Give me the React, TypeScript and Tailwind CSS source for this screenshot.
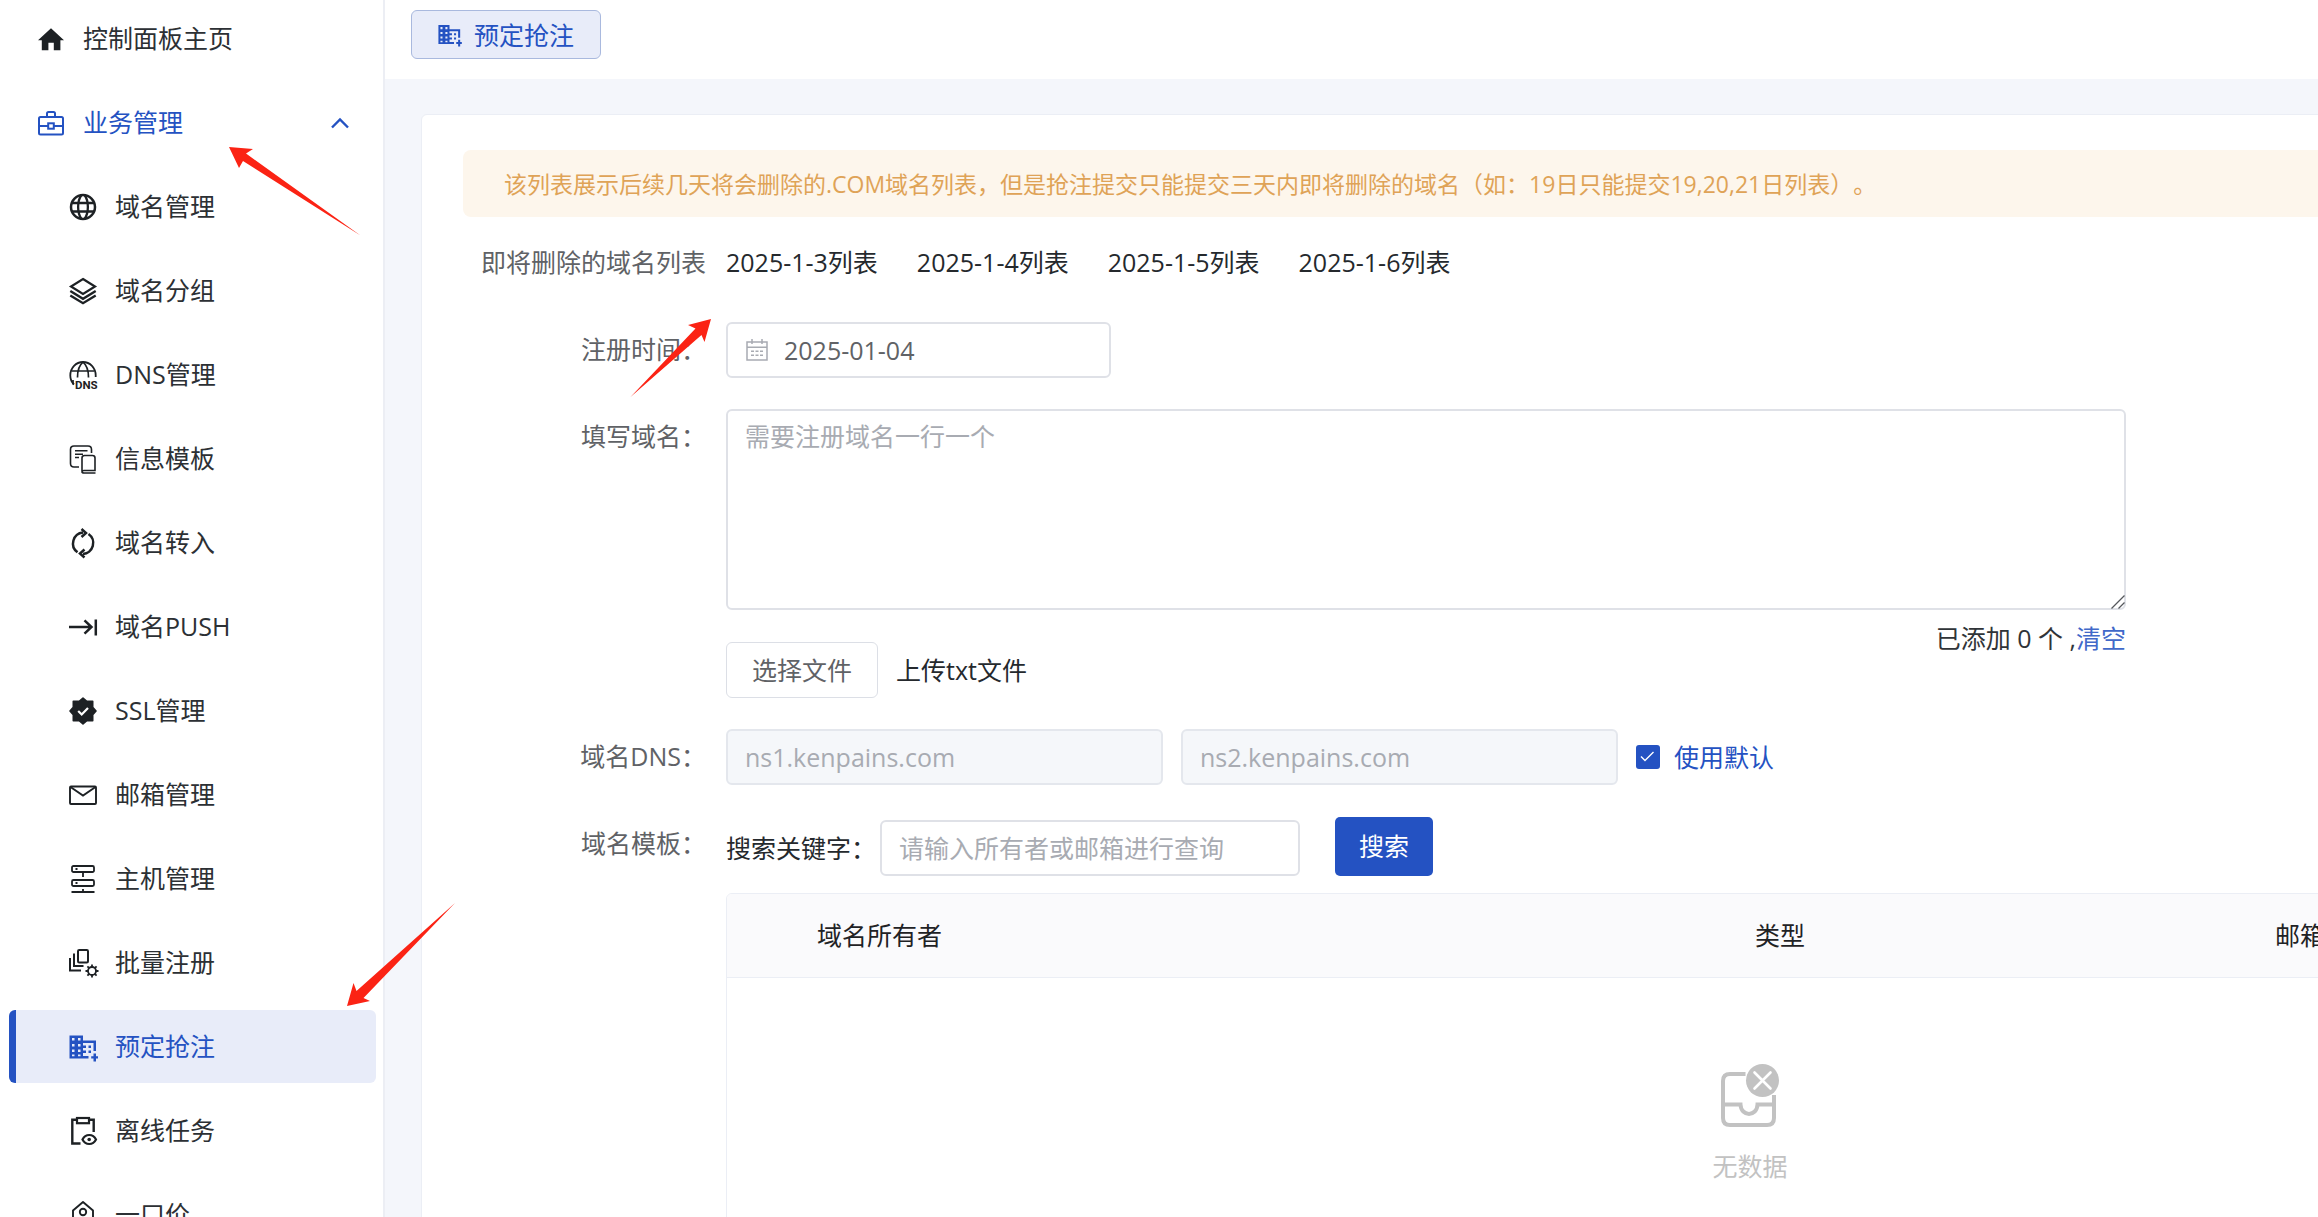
import type { ReactNode } from "react";

type IconProps = { size?: number };

function Svg({ size = 28, children }: { size?: number; children: ReactNode }) {
  return (
    <svg
      width={size}
      height={size}
      viewBox="0 0 28 28"
      fill="none"
      stroke="currentColor"
      strokeWidth={2}
      className="shrink-0 overflow-visible"
      aria-hidden="true"
    >
      {children}
    </svg>
  );
}

const HomeIcon = () => (
  <Svg>
    <path d="M14 3.3 27 15.2h-3.600v10h-6.600v-7.400h-5.400v7.400H4.800v-10H1z" fill="currentColor" stroke="none" />
  </Svg>
);

const BriefcaseIcon = () => (
  <Svg>
    <rect x="2" y="8" width="24" height="17.5" rx="1.5" />
    <path d="M10 8V4.500q0-1.500 1.500-1.500h5q1.500 0 1.500 1.500V8M2 17h9M17 17h9" />
    <rect x="11.200" y="14.300" width="5.600" height="5.400" />
  </Svg>
);

const GlobeIcon = () => (
  <Svg>
    <circle cx="14" cy="14" r="12" strokeWidth={2.5} />
    <path d="M12.500 2C8 8 8 20 12.500 26M15.500 2C20 8 20 20 15.500 26M3 10h22M3 18.500h22" strokeWidth={2.3} />
  </Svg>
);

const LayersIcon = () => (
  <Svg>
    <path d="M14 2 26 9.500 14 17 2 9.500z" strokeWidth={2.2} />
    <path d="M1.300 14 14 21.800 26.700 14M1.300 18.400 14 26.200 26.700 18.400" strokeWidth={2.4} />
  </Svg>
);

const DnsIcon = () => (
  <Svg>
    <path d="M5 23.500C2.500 21 1.300 18.500 1.300 14.500 1.300 7 7 1 14 1s12.700 6 12.700 13.500v1.500" strokeWidth={1.800} />
    <path d="M2.500 10h23M8.500 16.500C8.500 10 10.500 4 14 1.200 17.500 4 19.500 10 19.500 16.500M4 19v4.500" strokeWidth={1.700} />
    <text
      x="6"
      y="28.200"
      fill="currentColor"
      stroke="none"
      fontFamily="Roboto, sans-serif"
      fontSize="11.500"
      fontWeight="700"
    >
      DNS
    </text>
  </Svg>
);

const TemplateIcon = () => (
  <Svg>
    <path d="M10 22H5q-3.500 0-3.500-3.500v-14Q1.500 1 5 1h14q3.500 0 3.500 3.500V8" strokeWidth={1.600} />
    <path d="M6 5.800h12.500M6 9.200h8M6 12.500h4" strokeWidth={1.600} />
    <path d="M13 26V13q0-2.500 2.500-2.500h8q2.500 0 2.500 2.500v12.500H15q-2 0-2 1.300 0 1.200 2 1.200h11.500" strokeWidth={1.600} />
  </Svg>
);

const TransferIcon = () => (
  <Svg>
    <path d="M8.500 23.300A11 11 0 0 1 14 3.500M19.500 5a11 11 0 0 1-5.500 20" strokeWidth={2.500} />
    <path d="m12.500 0 4.500 4-4.500 4M15.500 20.500l-4.500 4 4.500 4" strokeWidth={2.500} />
  </Svg>
);

const PushIcon = () => (
  <Svg>
    <path d="M0 14h22M15.500 7.300l7 6.700-7 6.700M26.800 6.500v16" strokeWidth={2.500} />
  </Svg>
);

const SealIcon = () => (
  <Svg>
    <path
      d="M14 1l3.800 3.300h5.900v5.900L27 14l-3.300 3.800v5.900h-5.900L14 27l-3.800-3.300H4.300v-5.900L1 14l3.300-3.800V4.300h5.900z"
      fill="currentColor"
      strokeLinejoin="round"
      strokeWidth={1.600}
    />
    <path d="m9.200 14 3.500 3.500L19 11" stroke="#fff" strokeWidth={2.200} />
  </Svg>
);

const MailIcon = () => (
  <Svg>
    <rect x="1" y="5.500" width="26" height="17.500" rx="1" strokeWidth={1.900} />
    <path d="M1.500 6 14 14.500 26.500 6" strokeWidth={1.900} />
  </Svg>
);

const ServerIcon = () => (
  <Svg>
    <rect x="3" y="1" width="22" height="6" rx="1.500" strokeWidth={1.800} />
    <rect x="3" y="15" width="22" height="6" rx="1.500" strokeWidth={1.800} />
    <path d="M14 7v5M2.500 27h23M14 24v3M6.500 4h2M6.500 18h2" strokeWidth={1.800} />
  </Svg>
);

const BatchIcon = () => (
  <Svg>
    <rect x="9" y="1" width="10" height="12.500" rx="1.200" />
    <path d="M5 4.500V17h9.500M1 9v12.500h11" />
    <circle cx="23" cy="22" r="4" strokeWidth={1.800} />
    <path
      d="M23 15.500v2.500M23 26v2.500M16.500 22h2.500M27 22h2.500M18.400 17.400l1.800 1.800M25.800 24.800l1.800 1.800M27.600 17.400l-1.800 1.800M20.200 24.800l-1.800 1.800"
      strokeWidth={1.800}
    />
  </Svg>
);

const BuildingIcon = ({ size }: IconProps) => (
  <Svg size={size}>
    <path
      fill="currentColor"
      stroke="none"
      fillRule="evenodd"
      d="M.5 2.500H14V7.500H27V18h-2.500V10H14v2.500h3V15h-3v2.500h3V20h-3v3h5.500v2.500H.5zM3 5v2.500h2.500V5zM9 5v2.500h2.500V5zM3 11v2.500h2.500V11zM9 11v2.500h2.500V11zM3 16.500V19h2.500v-2.500zM9 16.500V19h2.500v-2.500zM3 21.500v1.800h2.500v-1.800zM9 21.500v1.800h2.500v-1.800zM19.500 12.500H22V15h-2.500zM19.500 17.500H22V20h-2.500zM24.500 20.500H27v2.700h2v2.300h-2v3h-2.500v-3h-2.300v-2.300h2.300z"
    />
  </Svg>
);

const ClipboardIcon = () => (
  <Svg>
    <path d="M11.500 26.500H3.300V2.800H8M20 2.800h4.700V15" strokeWidth={2.400} />
    <rect x="8" y="1" width="12" height="5.200" strokeWidth={2.200} />
    <path d="M13.500 22.500c3-6 10.500-6 13.500 0-3 6-10.500 6-13.500 0z" strokeWidth={2.200} />
    <circle cx="20.200" cy="22.500" r="1.800" fill="currentColor" stroke="none" />
  </Svg>
);

const TagIcon = () => (
  <Svg>
    <path d="M4 27.500V9.500L14 1l10 8.500v18z" strokeWidth={1.900} strokeLinejoin="round" />
    <circle cx="14" cy="11" r="3.200" strokeWidth={1.900} />
  </Svg>
);

const CalendarIcon = () => (
  <svg width={22} height={22} viewBox="0 0 22 22" fill="none" stroke="currentColor" className="shrink-0" aria-hidden="true">
    <path d="M1 3h20v18H1zM1 8.300h20M6 0v5M16 0v5M5 12.300h3M9.500 12.300h3M14 12.300h3M5 16.300h3M9.500 16.300h3M14 16.300h3" strokeWidth={1.500} />
  </svg>
);

const EmptyIcon = () => (
  <svg width={58} height={63} viewBox="0 0 58 63" fill="none" stroke="currentColor" strokeWidth={4} aria-hidden="true">
    <path d="M24.500 10H9q-7 0-7 7v37q0 7 7 7h37q7 0 7-7V31" />
    <path d="M2 40.500h17.500C20 53 36 53 36.500 40.500H53" />
    <circle cx="41.500" cy="16.500" r="16.500" fill="currentColor" stroke="none" />
    <path d="m33.500 8.500 16 16M49.500 8.500l-16 16" stroke="#fff" strokeWidth={2.6} strokeLinecap="round" />
  </svg>
);

const businessItems: { label: string; icon: ReactNode; active?: boolean }[] = [
  { label: "域名管理", icon: <GlobeIcon /> },
  { label: "域名分组", icon: <LayersIcon /> },
  { label: "DNS管理", icon: <DnsIcon /> },
  { label: "信息模板", icon: <TemplateIcon /> },
  { label: "域名转入", icon: <TransferIcon /> },
  { label: "域名PUSH", icon: <PushIcon /> },
  { label: "SSL管理", icon: <SealIcon /> },
  { label: "邮箱管理", icon: <MailIcon /> },
  { label: "主机管理", icon: <ServerIcon /> },
  { label: "批量注册", icon: <BatchIcon /> },
  { label: "预定抢注", icon: <BuildingIcon />, active: true },
  { label: "离线任务", icon: <ClipboardIcon /> },
  { label: "一口价", icon: <TagIcon /> },
];

const dateLists = ["2025-1-3列表", "2025-1-4列表", "2025-1-5列表", "2025-1-6列表"];

function Sidebar() {
  return (
    <nav className="w-[385px] shrink-0 overflow-hidden border-r-2 border-[#eceef4] bg-white pt-0.5 pr-[7px] pl-[9px]">
      <ul className="flex flex-col gap-[11px]">
        <li>
          <a href="#home" className="flex h-[73px] items-center gap-[18px] pl-7 text-[#1d2124]">
            <HomeIcon />
            <span className="pb-0.5 text-[#2c3034]">控制面板主页</span>
          </a>
        </li>
        <li>
          <button type="button" aria-expanded="true" className="flex h-[73px] w-full items-center gap-[18px] pr-[27px] pl-7 text-[#2452c2]">
            <BriefcaseIcon />
            <span className="pb-0.5">业务管理</span>
            <svg width={18} height={12} viewBox="0 0 18 12" fill="none" stroke="currentColor" strokeWidth={2.4} className="ml-auto" aria-hidden="true">
              <path d="m1 10.500 8-8 8 8" />
            </svg>
          </button>
        </li>
        {businessItems.map((item) => (
          <li key={item.label}>
            <a
              href={"#" + item.label}
              aria-current={item.active ? "page" : undefined}
              className={
                item.active
                  ? "flex h-[73px] items-center gap-[18px] rounded-md border-l-[7px] border-[#2452c2] bg-[#e8ecf9] pl-[53px] text-[#2452c2]"
                  : "flex h-[73px] items-center gap-[18px] rounded-md border-l-[7px] border-transparent pl-[53px] text-[#1d2124]"
              }
            >
              {item.icon}
              <span className={item.active ? "pb-0.5 text-[#2452c2]" : "pb-0.5 text-[#2c3034]"}>{item.label}</span>
            </a>
          </li>
        ))}
      </ul>
    </nav>
  );
}

function Row({ label, htmlFor, children }: { label: string; htmlFor?: string; children: ReactNode }) {
  return (
    <div className="flex items-start">
      <label htmlFor={htmlFor} className="flex h-14 w-[263px] shrink-0 items-center justify-end pr-5 pb-0.5 whitespace-nowrap text-[#606266]">
        {label}
      </label>
      <div className="min-w-0 flex-1">{children}</div>
    </div>
  );
}

function ReserveForm() {
  return (
    <form className="mt-[18px] flex flex-col gap-[31px]" onSubmit={(e) => e.preventDefault()}>
      <Row label="即将删除的域名列表">
        <div className="flex h-14 items-center gap-[39px] pb-0.5">
          {dateLists.map((d) => (
            <a key={d} href={"#" + d} className="text-[#25292d]">
              {d}
            </a>
          ))}
        </div>
      </Row>

      <Row label="注册时间：" htmlFor="reg-date">
        <div className="flex h-14 w-[385px] items-center gap-4 rounded-md border-2 border-[#dfe1e7] px-[18px] text-[#a8abb2]">
          <CalendarIcon />
          <input id="reg-date" type="text" defaultValue="2025-01-04" className="min-w-0 flex-1 text-[#606266] outline-none" />
        </div>
      </Row>

      <Row label="填写域名：" htmlFor="domains">
        <div className="w-[1400px]">
          <div className="relative">
            <textarea
              id="domains"
              placeholder="需要注册域名一行一个"
              className="block h-[201px] w-full resize-none rounded-md border-2 border-[#dfe1e7] px-[17px] py-[7px] leading-9 outline-none placeholder:text-[#a8abb2]"
            />
            <svg
              viewBox="0 0 14 14"
              className="pointer-events-none absolute right-px bottom-px size-3.5"
              fill="none"
              stroke="#55585c"
              strokeWidth={1.3}
              aria-hidden="true"
            >
              <path d="M.5 13.500 13.500.5M7.500 13.500l6-6" />
            </svg>
          </div>
          <div className="mt-3.5 flex items-start justify-between">
            <div className="flex items-center gap-[18px] pt-[18px]">
              <button type="button" className="h-14 w-38 rounded-md border border-[#dcdfe6] text-[#606266]">
                选择文件
              </button>
              <span className="text-[#25292d]">上传txt文件</span>
            </div>
            <p className="leading-7 text-[#303438]">
              已添加 0 个 ,
              <a href="#clear" className="text-[#4169c9]">
                清空
              </a>
            </p>
          </div>
        </div>
      </Row>

      <Row label="域名DNS：" htmlFor="ns1">
        <div className="flex items-center gap-[18px]">
          <input
            id="ns1"
            disabled
            value="ns1.kenpains.com"
            className="h-14 w-[437px] rounded-md border-2 border-[#e4e7ed] bg-[#f5f7fa] px-[17px] text-[#a8abb2]"
          />
          <input
            aria-label="ns2"
            disabled
            value="ns2.kenpains.com"
            className="h-14 w-[437px] rounded-md border-2 border-[#e4e7ed] bg-[#f5f7fa] px-[17px] text-[#a8abb2]"
          />
          <label className="flex items-center gap-3.5 text-[#2452c2]">
            <span className="grid">
              <input
                type="checkbox"
                defaultChecked
                className="col-start-1 row-start-1 size-6 appearance-none rounded-[3px] bg-[#2452c2]"
              />
              <svg viewBox="0 0 24 24" className="pointer-events-none col-start-1 row-start-1 size-6" fill="none" stroke="#fff" strokeWidth={1.4} aria-hidden="true">
                <path d="m5 11.500 4 4L17.500 7" />
              </svg>
            </span>
            使用默认
          </label>
        </div>
      </Row>

      <Row label="域名模板：" htmlFor="keyword">
        <div className="flex items-end pt-px">
          <label htmlFor="keyword" className="flex h-14 w-[154px] items-center whitespace-nowrap text-[#25292d]">
            搜索关键字：
          </label>
          <input
            id="keyword"
            placeholder="请输入所有者或邮箱进行查询"
            className="h-14 w-[420px] rounded-md border-2 border-[#dfe1e7] px-[17px] outline-none placeholder:text-[#a8abb2]"
          />
          <button type="submit" className="ml-[35px] h-[59px] w-[98px] rounded-[5px] bg-[#2452c2] pb-0.5 font-normal text-white">
            搜索
          </button>
        </div>

        <div className="mt-[17px] overflow-hidden rounded-t-md border border-[#ebeef5]">
          <table className="w-full table-fixed border-collapse text-left">
            <colgroup>
              <col className="w-[70px]" />
              <col className="w-[938px]" />
              <col className="w-[520px]" />
              <col />
            </colgroup>
            <thead>
              <tr className="h-[83px] border-b border-[#ebeef5] bg-[#fafafc] text-[#1f2225]">
                <th />
                <th className="px-5 font-normal">域名所有者</th>
                <th className="px-5 font-normal">类型</th>
                <th className="px-5 font-normal">邮箱</th>
              </tr>
            </thead>
            <tbody>
              <tr>
                <td colSpan={4} className="pt-[86px] pb-24 text-[#c2c2c2]">
                  <div className="flex flex-col items-center gap-[21px]">
                    <EmptyIcon />
                    <span>无数据</span>
                  </div>
                </td>
              </tr>
            </tbody>
          </table>
        </div>
      </Row>
    </form>
  );
}

function Arrows() {
  return (
    <svg className="pointer-events-none absolute top-0 left-0 h-[480px] w-[800px] overflow-visible" fill="#fb2314" aria-hidden="true">
      <path d="M229 147 253 149 246 153.500 360.500 235.500 243 161 239 168z" />
      <path d="M711 319 704.500 342 701.500 335 630.500 397 695.500 328.500 688 325z" />
      <path d="M347 1006 353.500 983 356.500 991 455 903 363.500 998 370 1001z" />
    </svg>
  );
}

export default function App() {
  return (
    <div className="relative flex h-screen overflow-hidden bg-[#f4f6fb] font-['Open_Sans','Noto_Sans_CJK_SC',sans-serif] text-[25px] leading-9 font-[370] [text-spacing-trim:space-all]">
      <Sidebar />
      <div className="flex min-w-0 flex-1 flex-col overflow-hidden">
        <header className="flex h-[79px] shrink-0 items-start bg-white pt-2.5 pl-[26px]">
          <button
            type="button"
            className="flex h-[49px] items-center gap-[13px] rounded-md border border-[#a9b9de] bg-[#e8ecf9] px-[26px] text-[#2452c2]"
          >
            <BuildingIcon size={23} />
            预定抢注
          </button>
        </header>
        <main className="min-w-[2431px] flex-1 pt-[35px] pl-9">
          <section className="min-h-full rounded-md border border-[#ebeef5] bg-white px-[41px] pt-[35px]">
            <p role="alert" className="flex h-[67px] items-center rounded-lg bg-[#fdf6ec] px-[41px] text-[23px] text-[#dfa357]">
              该列表展示后续几天将会删除的.COM域名列表，但是抢注提交只能提交三天内即将删除的域名（如：19日只能提交19,20,21日列表）。
            </p>
            <ReserveForm />
          </section>
        </main>
      </div>
      <Arrows />
    </div>
  );
}
